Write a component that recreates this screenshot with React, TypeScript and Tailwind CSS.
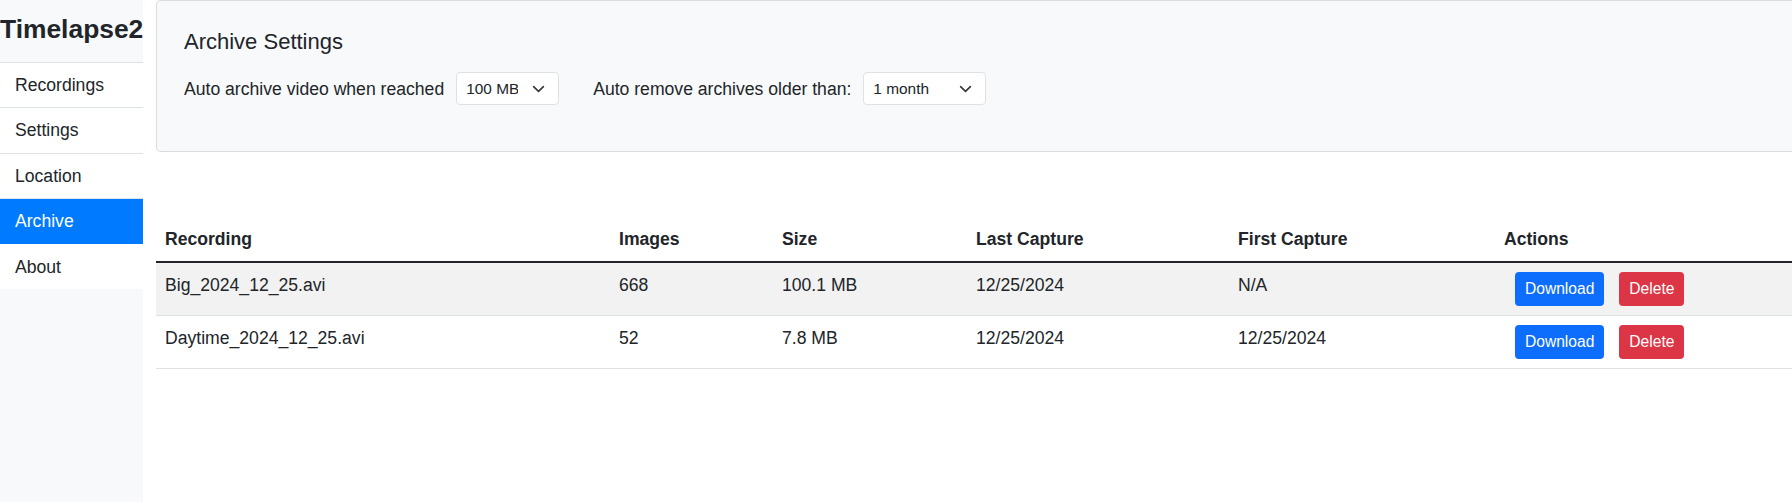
import { useState } from 'react';

type Archive = {
  name: string;
  images: number;
  size: string;
  lastCapture: string;
  firstCapture: string;
};

const navItems = ['Recordings', 'Settings', 'Location', 'Archive', 'About'];

const archives: Archive[] = [
  { name: 'Big_2024_12_25.avi', images: 668, size: '100.1 MB', lastCapture: '12/25/2024', firstCapture: 'N/A' },
  { name: 'Daytime_2024_12_25.avi', images: 52, size: '7.8 MB', lastCapture: '12/25/2024', firstCapture: '12/25/2024' },
];

const sizeOptions = ['50 MB', '100 MB', '200 MB', '500 MB'];
const ageOptions = ['1 week', '2 weeks', '1 month', '3 months', '6 months', '12 months'];

function Select({
  value,
  options,
  onChange,
  className,
}: {
  value: string;
  options: string[];
  onChange: (v: string) => void;
  className: string;
}) {
  return (
    <div className={`relative ${className}`}>
      <select
        value={value}
        onChange={(e) => onChange(e.target.value)}
        className="h-[33px] w-full appearance-none rounded-[4px] border border-[#dee2e6] bg-white pl-[9px] pr-[40px] text-[15.4px] leading-[23px] text-[#212529] outline-none"
      >
        {options.map((o) => (
          <option key={o} value={o}>
            {o}
          </option>
        ))}
      </select>
      <svg
        className="pointer-events-none absolute right-[14px] top-1/2 h-[13px] w-[13px] -translate-y-1/2"
        viewBox="0 0 16 16"
      >
        <path d="m2 5 6 6 6-6" fill="none" stroke="#343a40" strokeWidth="2" strokeLinecap="round" strokeLinejoin="round" />
      </svg>
    </div>
  );
}

function Sidebar({ active, onSelect }: { active: string; onSelect: (v: string) => void }) {
  return (
    <aside className="flex h-full w-[143px] shrink-0 flex-col bg-[#f8f9fa]">
      <div className="h-[62px] pt-[13px]">
        <h4 className="whitespace-nowrap text-[26.4px] font-bold leading-[32px] text-[#212529]">Timelapse2</h4>
      </div>
      <nav className="flex flex-col bg-white">
        {navItems.map((item, i) => (
          <button
            key={item}
            onClick={() => onSelect(item)}
            className={`flex h-[45.4px] items-center pl-[15px] text-left ${
              i < navItems.length - 1 ? 'border-t border-[#dee2e6]' : 'border-t border-transparent'
            } ${active === item ? 'border-[#007bff] bg-[#007bff] text-white' : 'text-[#212529]'}`}
          >
            {item}
          </button>
        ))}
      </nav>
    </aside>
  );
}

export default function App() {
  const [active, setActive] = useState('Archive');
  const [maxSize, setMaxSize] = useState('100 MB');
  const [maxAge, setMaxAge] = useState('1 month');

  return (
    <div className="flex h-[502px] overflow-hidden bg-white font-['Liberation_Sans',Arial,sans-serif] text-[17.6px] leading-[26.4px] text-[#212529]">
      <Sidebar active={active} onSelect={setActive} />

      <main className="min-w-0 flex-1 pl-[13px]">
        <section className="h-[152px] rounded-l-[5px] border border-r-0 border-[#dcdcdc] bg-[#f8f9fa] px-[27px] pt-[28px]">
          <h5 className="text-[22px] font-normal leading-[26.4px]">Archive Settings</h5>
          <div className="mt-[17px] flex h-[33px] items-center">
            <label>Auto archive video when reached</label>
            <Select value={maxSize} options={sizeOptions} onChange={setMaxSize} className="ml-[12px] w-[103px]" />
            <label className="ml-[34px]">Auto remove archives older than:</label>
            <Select value={maxAge} options={ageOptions} onChange={setMaxAge} className="ml-[12px] w-[123px]" />
          </div>
        </section>

        <table className="mt-[65px] w-full table-fixed border-collapse">
          <colgroup>
            <col className="w-[454px]" />
            <col className="w-[163px]" />
            <col className="w-[194px]" />
            <col className="w-[262px]" />
            <col className="w-[266px]" />
            <col />
          </colgroup>
          <thead>
            <tr>
              {['Recording', 'Images', 'Size', 'Last Capture', 'First Capture', 'Actions'].map((h) => (
                <th key={h} className="border-b-2 border-[#212529] px-[9px] py-[9px] text-left align-top font-bold">
                  {h}
                </th>
              ))}
            </tr>
          </thead>
          <tbody>
            {archives.map((a, i) => (
              <tr key={a.name} className={i % 2 === 0 ? 'bg-[#f2f2f2]' : 'bg-white'}>
                <td className="border-b border-[#dee2e6] px-[9px] py-[9px] align-top">{a.name}</td>
                <td className="border-b border-[#dee2e6] px-[9px] py-[9px] align-top">{a.images}</td>
                <td className="border-b border-[#dee2e6] px-[9px] py-[9px] align-top">{a.size}</td>
                <td className="border-b border-[#dee2e6] px-[9px] py-[9px] align-top">{a.lastCapture}</td>
                <td className="border-b border-[#dee2e6] px-[9px] py-[9px] align-top">{a.firstCapture}</td>
                <td className="border-b border-[#dee2e6] px-[9px] py-[9px] align-top">
                  <div className="flex">
                    <button className="ml-[11px] flex h-[34px] items-center rounded-[4px] bg-[#0d6efd] px-[10px] text-[15.6px] text-white">
                      Download
                    </button>
                    <button className="ml-[15px] flex h-[34px] items-center rounded-[4px] bg-[#dc3545] px-[10px] text-[15.6px] text-white">
                      Delete
                    </button>
                  </div>
                </td>
              </tr>
            ))}
          </tbody>
        </table>
      </main>
    </div>
  );
}
